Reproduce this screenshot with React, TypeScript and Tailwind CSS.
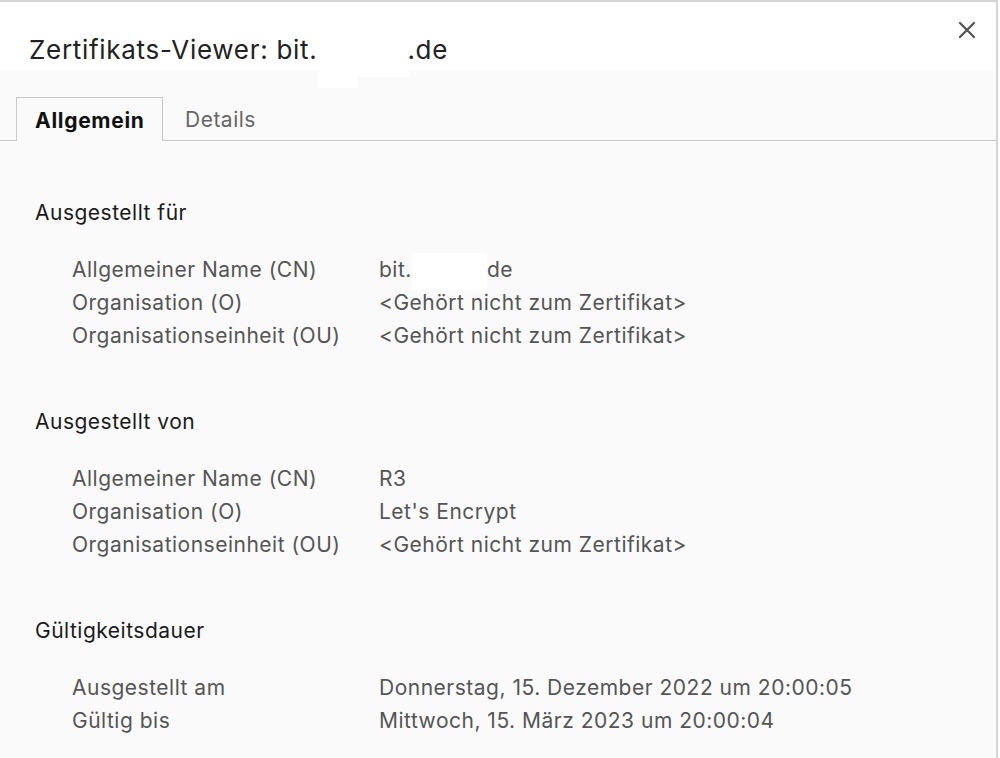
import React from "react";

interface Row {
  label: string;
  value: React.ReactNode;
}

interface Section {
  title: string;
  rows: Row[];
}

const NOT_PART = "<Gehört nicht zum Zertifikat>";

const sections: Section[] = [
  {
    title: "Ausgestellt für",
    rows: [
      {
        label: "Allgemeiner Name (CN)",
        value: (
          <>
            bit.
            <span className="inline-block w-[75px] h-[37px] bg-white align-middle -my-[4px]" />
            de
          </>
        ),
      },
      { label: "Organisation (O)", value: NOT_PART },
      { label: "Organisationseinheit (OU)", value: NOT_PART },
    ],
  },
  {
    title: "Ausgestellt von",
    rows: [
      { label: "Allgemeiner Name (CN)", value: "R3" },
      { label: "Organisation (O)", value: "Let's Encrypt" },
      { label: "Organisationseinheit (OU)", value: NOT_PART },
    ],
  },
  {
    title: "Gültigkeitsdauer",
    rows: [
      { label: "Ausgestellt am", value: "Donnerstag, 15. Dezember 2022 um 20:00:05" },
      { label: "Gültig bis", value: "Mittwoch, 15. März 2023 um 20:00:04" },
    ],
  },
];

export default function App() {
  return (
    <div className="w-[1000px] h-[758px] bg-white overflow-hidden font-['Inter','Liberation_Sans',sans-serif]">
      <div className="relative w-[998px] h-[758px] bg-[#fafafa] border-t-2 border-r-2 border-[#d4d4d4]">
        {/* Header */}
        <div className="h-[69px] bg-white pl-[29px] pt-[34px]">
          <h1 className="text-[26px] leading-[28px] tracking-[0.7px] text-[#222] whitespace-nowrap">
            Zertifikats-Viewer: bit.
            <span className="inline-block w-[90px]" />
            .de
          </h1>
        </div>
        {/* redaction leftovers below the title */}
        <div className="absolute left-[318px] top-[69px] w-[40px] h-[17px] bg-white" />
        <div className="absolute left-[358px] top-[69px] w-[52px] h-[6px] bg-white" />

        <button className="absolute right-[19px] top-[18px] w-[20px] h-[20px] flex items-center justify-center">
          <svg width="18" height="18" viewBox="0 0 18 18" fill="none" stroke="#555" strokeWidth="2.3" strokeLinecap="round">
            <path d="M2 2l14 14M16 2 2 16" />
          </svg>
        </button>

        {/* Tabs */}
        <div className="mt-[26px] h-[44px] pl-[16px] flex items-end border-b border-[#c8c8c8]">
          <div className="h-[44px] w-[147px] -mb-px border border-b-0 border-[#c8c8c8] bg-[#fafafa] pl-[18px] pt-[3px] flex items-center">
            <span className="text-[21px] font-bold tracking-[0.7px] text-[#111]">Allgemein</span>
          </div>
          <div className="h-[44px] pl-[22px] pt-[3px] flex items-center">
            <span className="text-[21px] tracking-[0.5px] text-[#666]">Details</span>
          </div>
        </div>

        {/* Content */}
        <div className="pl-[35px] pt-[58px] flex flex-col gap-[56px] tracking-[0.5px]">
          {sections.map((s) => (
            <div key={s.title}>
              <h2 className="text-[21px] leading-[28px] text-[#1a1a1a]">{s.title}</h2>
              <div className="mt-[26px] pl-[37px] grid grid-cols-[307px_1fr]">
                {s.rows.map((r) => (
                  <React.Fragment key={r.label}>
                    <div className="text-[21px] leading-[33px] text-[#555]">{r.label}</div>
                    <div className="text-[21px] leading-[33px] text-[#555] whitespace-nowrap">{r.value}</div>
                  </React.Fragment>
                ))}
              </div>
            </div>
          ))}
        </div>
      </div>
    </div>
  );
}
